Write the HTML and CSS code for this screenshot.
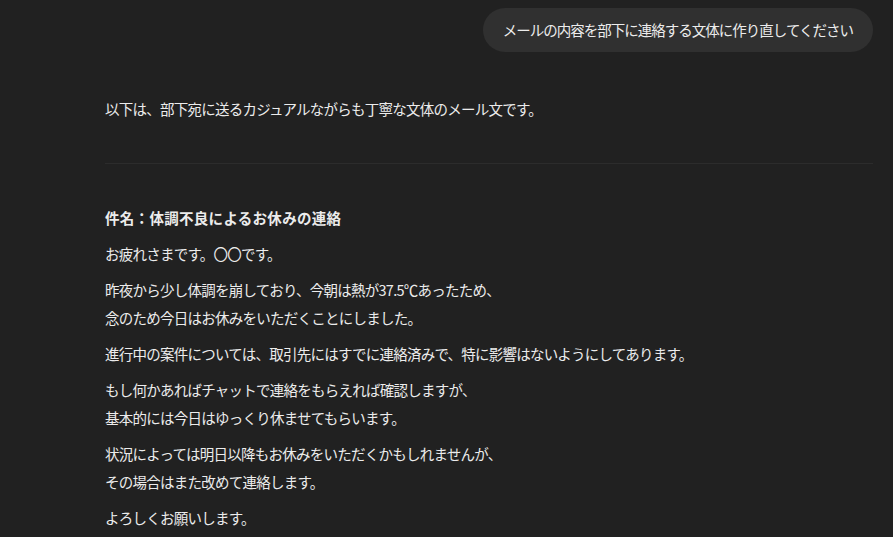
FILE: index.html
```html
<!DOCTYPE html>
<html lang="ja">
<head>
<meta charset="utf-8">
<title>Chat</title>
<link rel="stylesheet" href="styles.css">
</head>
<body>
<main class="thread">
  <div class="user-row">
    <div class="bubble">メールの内容を部下に連絡する文体に作り直してください</div>
  </div>
  <div class="assistant">
    <p class="intro">以下は、部下宛に送るカジュアルながらも丁寧な文体のメール文です。</p>
    <hr class="divider">
    <p><strong>件名：体調不良によるお休みの連絡</strong></p>
    <p>お疲れさまです。〇〇です。</p>
    <p>昨夜から少し体調を崩しており、今朝は熱が37.5℃あったため、<br>念のため今日はお休みをいただくことにしました。</p>
    <p>進行中の案件については、取引先にはすでに連絡済みで、特に影響はないようにしてあります。</p>
    <p>もし何かあればチャットで連絡をもらえれば確認しますが、<br>基本的には今日はゆっくり休ませてもらいます。</p>
    <p>状況によっては明日以降もお休みをいただくかもしれませんが、<br>その場合はまた改めて連絡します。</p>
    <p>よろしくお願いします。</p>
  </div>
</main>
</body>
</html>
```

FILE: styles.css
```css
html, body {
  margin: 0;
  padding: 0;
  background: #212121;
}
body {
  color: #ececec;
  font-family: "Noto Sans CJK JP", "Noto Sans", sans-serif;
  font-size: 14.5px;
  letter-spacing: -0.75px;
  line-height: 28px;
  overflow: hidden;
}
.thread {
  padding: 8px 20px 0 105px;
}
.user-row {
  display: flex;
  justify-content: flex-end;
}
.bubble {
  background: #303030;
  border-radius: 22px;
  padding: 8px 20px;
  line-height: 28px;
  letter-spacing: -1px;
}
.assistant p {
  margin: 8px 0 0;
}
.assistant .intro {
  margin-top: 43px;
}
.divider {
  border: 0;
  border-top: 1px solid #2c2c2c;
  margin: 40px 0 0;
  height: 0;
}
.divider + p {
  margin-top: 40px;
}
strong {
  font-weight: 700;
  letter-spacing: 0.3px;
}
```
